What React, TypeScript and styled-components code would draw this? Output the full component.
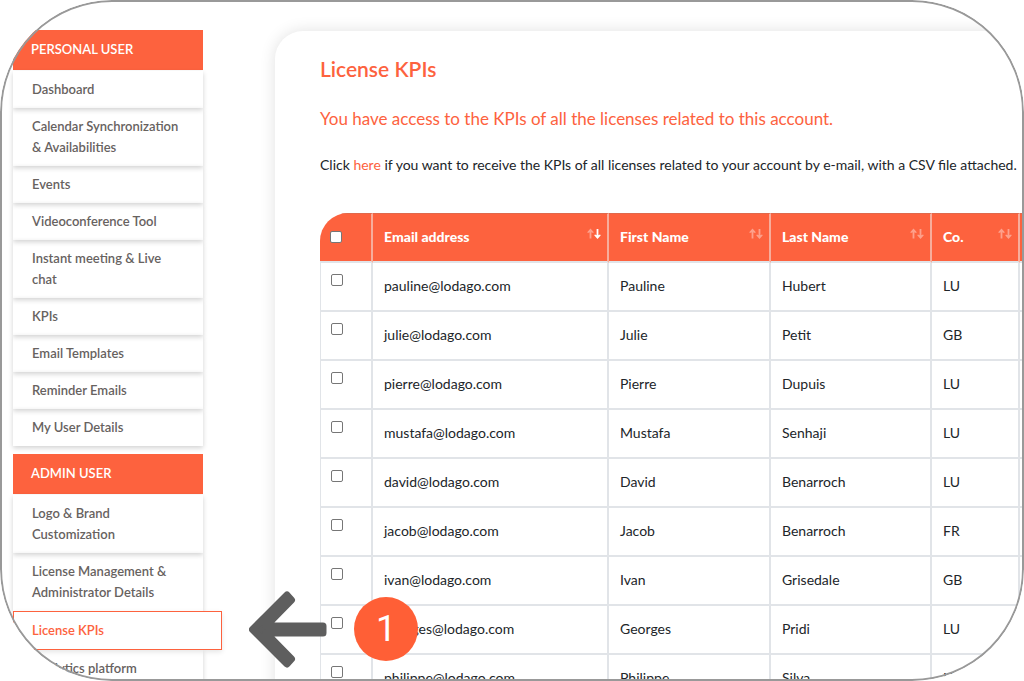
import React from "react";
import styled, { createGlobalStyle } from "styled-components";

const ORANGE = "#fd623e";
const LINE = "#e1e4e8";

const GlobalStyle = createGlobalStyle`
  *, *::before, *::after { box-sizing: border-box; }
  body {
    margin: 0;
    background: #fff;
    color: #212529;
    font-family: Lato, "Noto Sans", sans-serif;
    font-size: 14px;
  }
`;

const Frame = styled.div`
  position: relative;
  display: flex;
  align-items: flex-start;
  gap: 72px;
  height: 100vh;
  padding: 30px 0 0 13px;
  border-radius: 112px;
  overflow: hidden;

  &::after {
    content: "";
    position: absolute;
    inset: 0;
    z-index: 3;
    border: 2px solid #999;
    border-radius: inherit;
    pointer-events: none;
  }
`;

const Sidebar = styled.nav`
  position: relative;
  z-index: 2;
  flex: 0 0 190px;
  min-width: 0;
`;

const GroupTitle = styled.h2`
  margin: 0 0 1px;
  padding: 0 18px 2px;
  background: ${ORANGE};
  color: #fff;
  font-size: 13px;
  font-weight: 600;
  line-height: 38px;
`;

const NavList = styled.ul`
  list-style: none;
  margin: 0 0 8px;
  padding: 0;
`;

const NavItem = styled.li`
  position: relative;
`;

const ActiveNavItem = styled(NavItem)`
  z-index: 1;
`;

const NavLink = styled.a`
  display: block;
  padding: 8px 16px 8px 19px;
  box-shadow: 0 2px 5px rgba(0, 0, 0, 0.18);
  color: #67625f;
  font-size: 13px;
  font-weight: 600;
  line-height: 21px;
  text-decoration: none;
`;

const ActiveNavLink = styled(NavLink)`
  width: 209px;
  padding-left: 18px;
  border: 1px solid ${ORANGE};
  background: #fff;
  box-shadow: 0 2px 5px rgba(0, 0, 0, 0.1);
  color: ${ORANGE};
`;

const Callout = styled.div`
  position: absolute;
  left: 236px;
  top: 18px;
  display: flex;
  align-items: center;
  gap: 27px;
  transform: translateY(-50%);
`;

const Badge = styled.span`
  width: 64px;
  height: 64px;
  border-radius: 50%;
  background: #ff5f36;
  color: #fff;
  font: 36px/64px Roboto, "Liberation Sans", sans-serif;
  text-align: center;
`;

const Panel = styled.main`
  flex: 1 0 auto;
  margin-top: 1px;
  padding: 24px 45px;
  border-radius: 28px;
  background: #fff;
  box-shadow: 0 0 16px rgba(0, 0, 0, 0.12);
`;

const Title = styled.h1`
  margin: 0;
  color: ${ORANGE};
  font-size: 21px;
  font-weight: 600;
  line-height: 28px;
`;

const Lead = styled.p`
  margin: 22px 0;
  color: ${ORANGE};
  font-size: 17px;
  line-height: 28px;
`;

const Note = styled.p`
  margin: 0 0 38px;
  line-height: 20px;
`;

const InlineLink = styled.a`
  color: ${ORANGE};
  text-decoration: none;
`;

const Table = styled.table`
  width: 860px;
  table-layout: fixed;
  border-collapse: separate;
  border-spacing: 0;
  border-radius: 28px 0 0 0;
  overflow: hidden;
`;

const HeadCell = styled.th`
  height: 50px;
  padding: 0 6px 2px 11px;
  border-right: 2px solid #f7ad9b;
  border-bottom: 2px solid ${LINE};
  border-top: 1px solid #e0694c;
  background: ${ORANGE};
  color: #fff;
  font-size: 14px;
  font-weight: 900;
  text-align: left;
  &:first-child { padding-left: 10px; }
`;

const HeadContent = styled.div`
  display: flex;
  align-items: flex-start;
  justify-content: space-between;
  line-height: 18px;
`;

const Cell = styled.td`
  height: 49px;
  padding: 0 11px 2px;
  border-right: 2px solid ${LINE};
  border-bottom: 2px solid ${LINE};
  &:first-child { border-left: 1px solid ${LINE}; }
`;

const CheckCell = styled(Cell)`
  padding: 11px 10px 0;
  vertical-align: top;
`;

const Check = styled.input`
  display: block;
  appearance: none;
  width: 12px;
  height: 12px;
  margin: 0;
  border: 1px solid #767676;
  border-radius: 2px;
  background: #fff;
`;

const SortButton = styled.button`
  display: flex;
  padding: 0;
  border: 0;
  background: none;
`;

function SortIcon({ sorted }: { sorted?: boolean }) {
  return (
    <svg width="14" height="12" viewBox="0 0 14 12" fill="#fff">
      <path d="M3.5 0.5L6.8 4.2L6 5L4.4 4.2V10.5H2.6V4.2L1 5L0.2 4.2Z" opacity="0.4" />
      <path d="M10.5 11L13.8 7.3L13 6.5L11.4 7.2V1H9.6V7.2L8 6.5L7.2 7.3Z" opacity={sorted ? 1 : 0.4} />
    </svg>
  );
}

const personal = [
  "Dashboard",
  "Calendar Synchronization & Availabilities",
  "Events",
  "Videoconference Tool",
  "Instant meeting & Live chat",
  "KPIs",
  "Email Templates",
  "Reminder Emails",
  "My User Details",
];
const admin = ["Logo & Brand Customization", "License Management & Administrator Details", "License KPIs", "Analytics platform"];

const columns = [
  { label: "Email address", width: 236 },
  { label: "First Name", width: 162 },
  { label: "Last Name", width: 161 },
  { label: "Co.", width: 88 },
];

const users = [
  ["pauline@lodago.com", "Pauline", "Hubert", "LU"],
  ["julie@lodago.com", "Julie", "Petit", "GB"],
  ["pierre@lodago.com", "Pierre", "Dupuis", "LU"],
  ["mustafa@lodago.com", "Mustafa", "Senhaji", "LU"],
  ["david@lodago.com", "David", "Benarroch", "LU"],
  ["jacob@lodago.com", "Jacob", "Benarroch", "FR"],
  ["ivan@lodago.com", "Ivan", "Grisedale", "GB"],
  ["georges@lodago.com", "Georges", "Pridi", "LU"],
  ["philippe@lodago.com", "Philippe", "Silva", "LU"],
];

function StepCallout({ step }: { step: number }) {
  return (
    <Callout>
      <svg width="78" height="78" viewBox="0 0 78 78" fill="#5e5e5e" stroke="#5e5e5e" strokeWidth="7" strokeLinejoin="round">
        <path d="M3.5 39.5L38 5L42.5 10L17 36H74V43H17L42.5 69L38 74Z" />
      </svg>
      <Badge>{step}</Badge>
    </Callout>
  );
}

function NavGroup({ title, items, active }: { title: string; items: string[]; active?: string }) {
  return (
    <>
      <GroupTitle>{title}</GroupTitle>
      <NavList>
        {items.map((item) =>
          item === active ? (
            <ActiveNavItem key={item}>
              <ActiveNavLink href="#" aria-current="page">{item}</ActiveNavLink>
              <StepCallout step={1} />
            </ActiveNavItem>
          ) : (
            <NavItem key={item}>
              <NavLink href="#">{item}</NavLink>
            </NavItem>
          )
        )}
      </NavList>
    </>
  );
}

export default function App() {
  return (
    <>
      <GlobalStyle />
      <Frame>
        <Sidebar>
          <NavGroup title="PERSONAL USER" items={personal} />
          <NavGroup title="ADMIN USER" items={admin} active="License KPIs" />
        </Sidebar>
        <Panel>
          <Title>License KPIs</Title>
          <Lead>You have access to the KPIs of all the licenses related to this account.</Lead>
          <Note>
            Click <InlineLink href="#">here</InlineLink> if you want to receive the KPIs of all licenses related to your account by e-mail, with a CSV file attached.
          </Note>
          <Table>
            <colgroup>
              <col width={53} />
              {columns.map((c) => <col key={c.label} width={c.width} />)}
              <col />
            </colgroup>
            <thead>
              <tr>
                <HeadCell><Check type="checkbox" aria-label="Select all" /></HeadCell>
                {columns.map((c, i) => (
                  <HeadCell key={c.label}>
                    <HeadContent>
                      {c.label}
                      <SortButton aria-label={`Sort by ${c.label}`}><SortIcon sorted={i === 0} /></SortButton>
                    </HeadContent>
                  </HeadCell>
                ))}
                <HeadCell />
              </tr>
            </thead>
            <tbody>
              {users.map((row) => (
                <tr key={row[0]}>
                  <CheckCell><Check type="checkbox" aria-label={`Select ${row[0]}`} /></CheckCell>
                  {row.map((value, i) => <Cell key={i}>{value}</Cell>)}
                  <Cell />
                </tr>
              ))}
            </tbody>
          </Table>
        </Panel>
      </Frame>
    </>
  );
}
